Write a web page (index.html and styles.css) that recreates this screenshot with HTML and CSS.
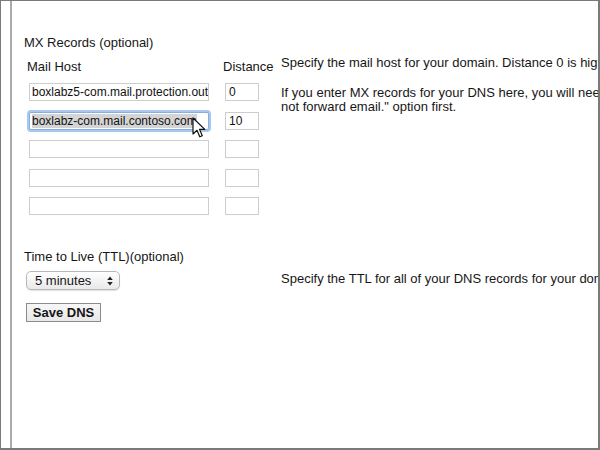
FILE: index.html
```html
<!DOCTYPE html>
<html>
<head>
<meta charset="utf-8">
<link rel="stylesheet" href="styles.css">
</head>
<body>
<div class="frame">
  <div class="tabline"></div>
  <div class="gutter"></div>
  <div class="page">
    <section class="mx">
      <div class="section-title">MX Records (optional)</div>
      <div class="mx-body">
        <div class="mx-fields">
          <div class="row head">
            <div class="head-host">Mail Host</div>
            <div class="head-dist">Distance</div>
          </div>
          <div class="row">
            <div class="field host"><span class="val">boxlabz5-com.mail.protection.outlook.com</span></div>
            <div class="field dist"><span class="val">0</span></div>
          </div>
          <div class="row">
            <div class="field host focused"><span class="val"><span class="sel">boxlabz-com.mail.contoso.com</span></span></div>
            <div class="field dist"><span class="val">10</span></div>
          </div>
          <div class="row">
            <div class="field host"></div>
            <div class="field dist"></div>
          </div>
          <div class="row">
            <div class="field host"></div>
            <div class="field dist"></div>
          </div>
          <div class="row">
            <div class="field host"></div>
            <div class="field dist"></div>
          </div>
        </div>
        <div class="mx-help">
          <p class="p1">Specify the mail host for your domain. Distance 0 is highest priority.</p>
          <p class="p2">If you enter MX records for your DNS here, you will need to select "Do<br>not forward email." option first.</p>
        </div>
      </div>
    </section>
    <section class="ttl">
      <div class="section-title">Time to Live (TTL)(optional)</div>
      <div class="ttl-body">
        <div class="ttl-controls">
          <div class="select">
            <span>5 minutes</span>
            <svg class="arrows" width="6" height="10" viewBox="0 0 6 10"><path d="M3 0.5 L5.8 4 L0.2 4 Z M3 9.5 L5.8 6 L0.2 6 Z" fill="#222"/></svg>
          </div>
          <div class="button">Save DNS</div>
        </div>
        <div class="ttl-help">Specify the TTL for all of your DNS records for your domain.</div>
      </div>
    </section>
  </div>
  <svg class="cursor" width="16" height="22" viewBox="0 0 16 22"><path d="M1 1 L1 17 L5 13.3 L7.8 19.8 L10.3 18.7 L7.6 12.4 L12.8 12.4 Z" fill="#fff" stroke="#111" stroke-width="1.2" stroke-linejoin="round"/></svg>
</div>
</body>
</html>
```

FILE: styles.css
```css
html, body {
  margin: 0;
  padding: 0;
  background: #fff;
}

.frame {
  position: relative;
  width: 600px;
  height: 450px;
  box-sizing: border-box;
  border: 1px solid #7a7a7a;
  border-right-width: 2px;
  border-bottom-width: 2px;
  display: flex;
  overflow: hidden;
  background: #fff;
  font-family: "Liberation Sans", Arial, sans-serif;
  font-size: 13px;
  color: #161616;
}

.tabline {
  position: absolute;
  left: 34px;
  top: -1px;
  width: 74px;
  height: 1px;
  background: #d0d0d0;
}

.gutter {
  width: 9px;
  flex: none;
}

.page {
  flex: 1;
  border-left: 2px solid #ababab;
  padding: 34px 0 0 12px;
  overflow: hidden;
}

.section-title {
  line-height: 15px;
}

.mx-body {
  display: flex;
  margin-top: 6px;
}

.mx-fields {
  width: 257px;
  flex: none;
  padding-top: 3px;
  display: flex;
  flex-direction: column;
  gap: 10.5px;
}

.row {
  display: flex;
}

.row.head {
  line-height: 15px;
  margin-bottom: -1.5px;
}

.head-host {
  width: 193px;
  padding-left: 3px;
}

.head-dist {
  padding-left: 3px;
}

.field {
  height: 18px;
  box-sizing: border-box;
  border: 1px solid #cdcdcd;
  background: #fff;
  font-size: 12px;
  line-height: 16px;
  overflow: hidden;
  white-space: nowrap;
  color: #111;
}

.field .val {
  padding-left: 2px;
}

.field.host {
  margin-left: 5px;
  width: 180px;
}

.field.dist {
  margin-left: 16px;
  width: 34px;
}

.field.dist .val {
  padding-left: 3px;
}

.field.focused {
  border-color: #85aee4;
  box-shadow: 0 0 0 2px #a9c8f0;
  border-radius: 2px;
}

.sel {
  background: #d4d4d4;
}

.mx-help {
  flex: none;
  white-space: nowrap;
  line-height: 14px;
}

.mx-help p {
  margin: 0;
}

.mx-help .p2 {
  margin-top: 16px;
}

.ttl {
  margin-top: 34px;
}

.ttl-body {
  display: flex;
  margin-top: 7px;
}

.ttl-controls {
  width: 257px;
  flex: none;
  display: flex;
  flex-direction: column;
  align-items: flex-start;
  gap: 13px;
}

.select {
  margin-left: 2px;
  width: 94px;
  height: 19px;
  box-sizing: border-box;
  border: 1px solid #b8b8b8;
  border-radius: 5px;
  background: linear-gradient(#ffffff, #e9e9e9);
  box-shadow: 0 1px 1px rgba(0, 0, 0, 0.12);
  display: flex;
  align-items: center;
  justify-content: space-between;
  padding: 0 6px 0 8px;
  line-height: 17px;
}

.arrows {
  display: block;
}

.button {
  margin-left: 2px;
  width: 75px;
  height: 19px;
  box-sizing: border-box;
  border: 1px solid #8c8c8c;
  background: linear-gradient(#f7f7f7, #e8e8e8);
  font-weight: bold;
  text-align: center;
  line-height: 17px;
}

.ttl-help {
  white-space: nowrap;
  line-height: 15px;
}

.cursor {
  position: absolute;
  left: 191px;
  top: 116px;
}
```
